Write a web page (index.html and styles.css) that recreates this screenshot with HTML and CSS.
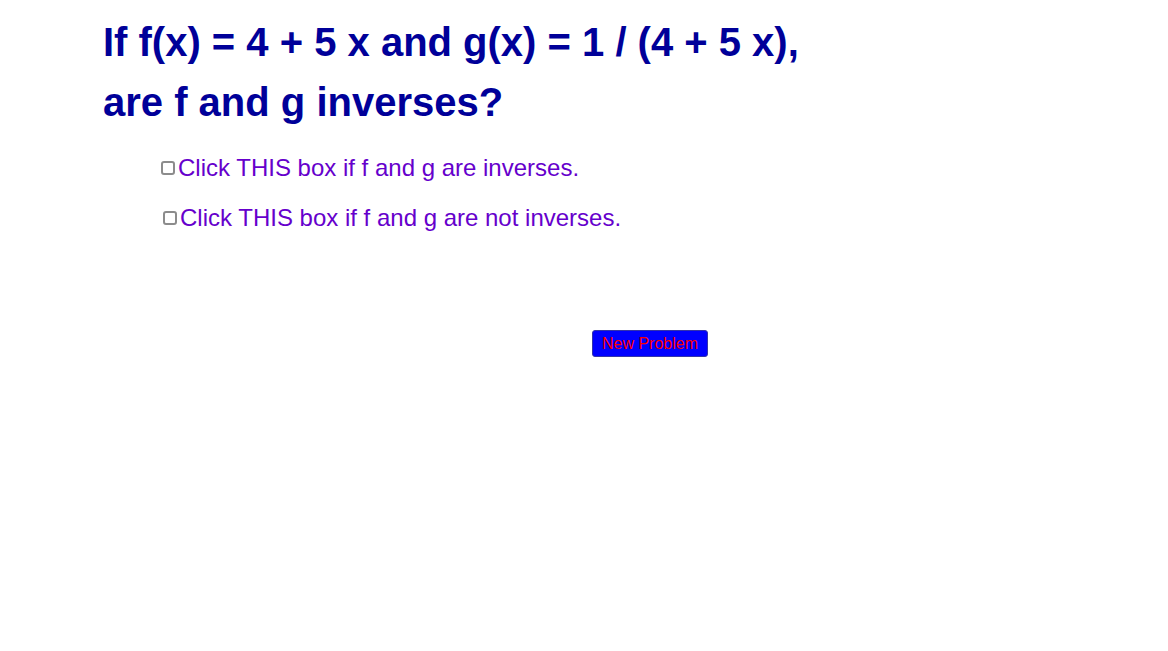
FILE: index.html
```html
<!DOCTYPE html>
<html>
<head>
<meta charset="utf-8">
<link rel="stylesheet" href="styles.css">
</head>
<body>
<div class="canvas">
  <h1 class="title">
    <div class="line">If f(x) = 4 + 5 x and g(x) = 1 / (4 + 5 x),</div>
    <div class="line">are f and g inverses?</div>
  </h1>
  <label class="opt opt1"><span class="box"></span><span class="txt">Click THIS box if f and g are inverses.</span></label>
  <label class="opt opt2"><span class="box"></span><span class="txt">Click THIS box if f and g are not inverses.</span></label>
  <div class="btnrow"><button class="btn">New Problem</button></div>
</div>
</body>
</html>
```
FILE: styles.css
```css
html, body { margin: 0; padding: 0; background: #fff; }
body { width: 1168px; height: 651px; overflow: hidden; font-family: "Liberation Sans", Arial, sans-serif; }
.canvas { padding-top: 14px; }
.title { margin: 0 0 0 103px; font-size: 40px; font-weight: bold; color: #000099; }
.line { height: 60px; line-height: 56px; }
.opt { display: flex; align-items: center; color: #6600cc; font-size: 24px; height: 28px; }
.opt1 { margin: 20px 0 0 161px; }
.opt2 { margin: 22px 0 0 163px; }
.box { box-sizing: border-box; width: 14px; height: 14px; border: 2px solid #8c8c8c; border-radius: 3px; margin: 0 3px 0 0; background: #fff; }
.btnrow { padding: 98px 0 0 592px; }
.btn { display: block; width: 116px; height: 27px; background: #0000ff; color: #ff0000; border: 1px solid #3333aa; border-radius: 3px; font-family: "Liberation Sans", Arial, sans-serif; font-size: 16px; padding: 0; }
```
